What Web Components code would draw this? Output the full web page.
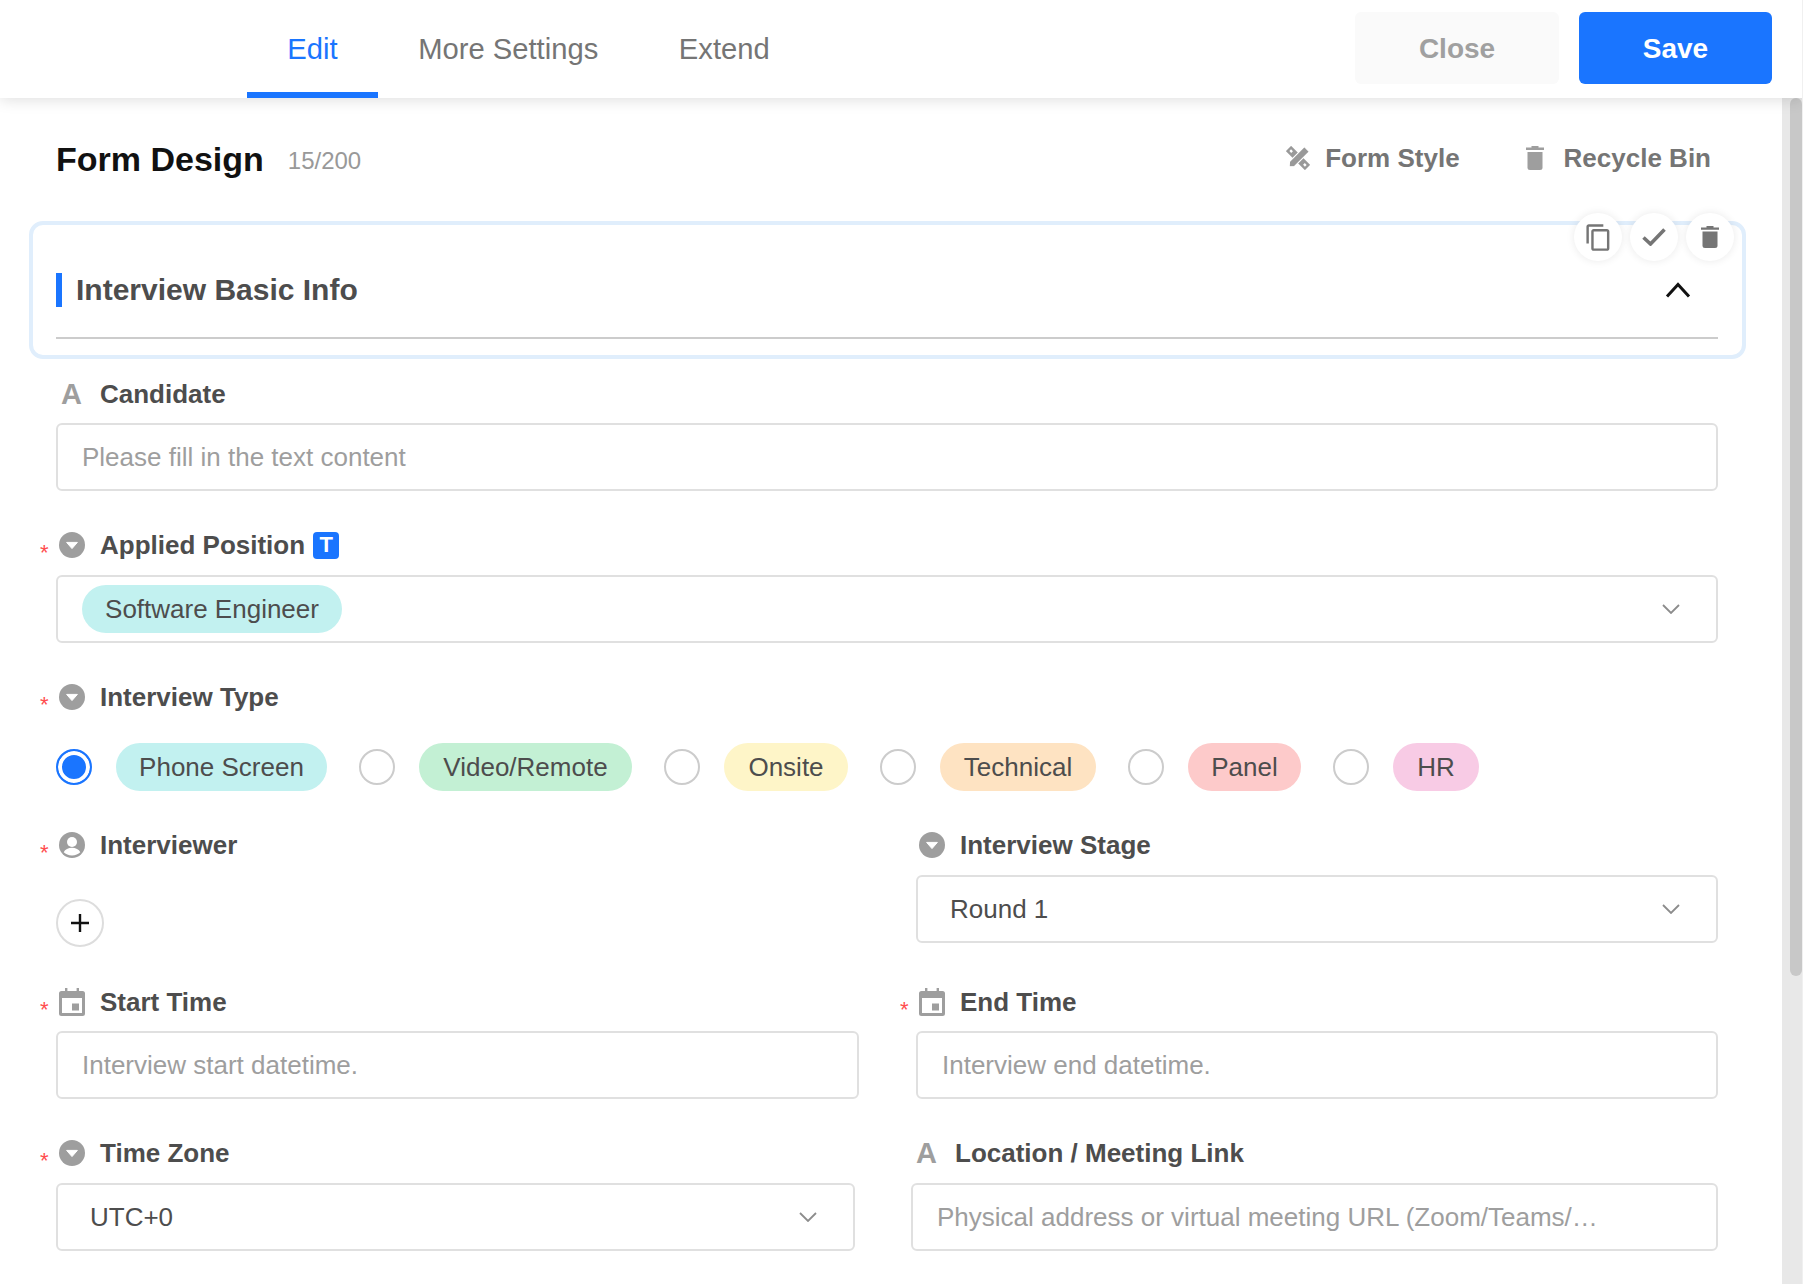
<!DOCTYPE html>
<html>
<head>
<meta charset="utf-8">
<title>Form Design</title>
<style>
  html, body { margin: 0; height: 100%; overflow: hidden; background: #fff; }
  body { font-family: "Liberation Sans", Arial, sans-serif; color: #4d4d4d; }
</style>
</head>
<body>
<app-shell>
  <app-header></app-header>
  <form-head></form-head>
  <section-card title="Interview Basic Info"></section-card>
  <form-body>
    <form-field label="Candidate" icon="text" tight>
      <text-box>Please fill in the text content</text-box>
    </form-field>

    <form-field label="Applied Position" icon="caret" required>
      <span slot="badge" class="t-badge">T</span>
      <select-box tag>
        <color-tag color="#c2f1f0" width="260">Software Engineer</color-tag>
      </select-box>
    </form-field>

    <form-field label="Interview Type" icon="caret" required>
      <option-row>
        <radio-option checked color="#c2f1f0" width="211">Phone Screen</radio-option>
        <radio-option color="#c3f0d4" width="213">Video/Remote</radio-option>
        <radio-option color="#fef5c8" width="124">Onsite</radio-option>
        <radio-option color="#fee3c2" width="156">Technical</radio-option>
        <radio-option color="#fdcaca" width="113">Panel</radio-option>
        <radio-option color="#f8cbe5" width="86">HR</radio-option>
      </option-row>
    </form-field>

    <form-row>
      <form-field label="Interviewer" icon="person" required>
        <add-button></add-button>
      </form-field>
      <form-field label="Interview Stage" icon="caret">
        <select-box value>Round 1</select-box>
      </form-field>
    </form-row>

    <form-row>
      <form-field label="Start Time" icon="calendar" required tight>
        <text-box>Interview start datetime.</text-box>
      </form-field>
      <form-field label="End Time" icon="calendar" required tight>
        <text-box>Interview end datetime.</text-box>
      </form-field>
    </form-row>

    <form-row shifted>
      <form-field label="Time Zone" icon="caret" required>
        <select-box value>UTC+0</select-box>
      </form-field>
      <form-field label="Location / Meeting Link" icon="text">
        <text-box>Physical address or virtual meeting URL (Zoom/Teams/…</text-box>
      </form-field>
    </form-row>
  </form-body>
</app-shell>

<script>
const ICONS = {
  caret: `<svg viewBox="0 0 26 26" width="26" height="26"><circle cx="13" cy="13" r="13" fill="#9e9e9e"/><path d="M7.6 10.4h10.8L13 16.6z" fill="#fff" stroke="#fff" stroke-width="1" stroke-linejoin="round"/></svg>`,
  person: `<svg viewBox="0 0 26 26" width="26" height="26"><circle cx="13" cy="13" r="13" fill="#9e9e9e"/><circle cx="13" cy="10" r="5" fill="#fff"/><path d="M4.700 20.300c1.300-3 4.700-4.600 8.300-4.600s7 1.600 8.300 4.600c-1.900 2-5 3.100-8.300 3.100s-6.400-1.100-8.300-3.100z" fill="#fff"/></svg>`,
  calendar: `<svg viewBox="0 0 26 28" width="26" height="28"><path d="M6 0h2.400v3H17.600V0H20v3h3.500A2.500 2.500 0 0 1 26 5.500v20a2.500 2.500 0 0 1-2.500 2.500h-21A2.500 2.500 0 0 1 0 25.500v-20A2.500 2.500 0 0 1 2.500 3H6z" fill="#9e9e9e"/><rect x="3" y="10" width="20" height="15" fill="#fff"/><rect x="13" y="15.500" width="7" height="7" fill="#9e9e9e"/></svg>`,
  style: `<svg viewBox="0 0 24 24" width="24" height="24"><g transform="rotate(45 12 12)"><rect x="-1.500" y="8.300" width="27" height="7.400" fill="#999"/><rect x="1" y="10.800" width="2.600" height="2.400" fill="#fff"/><rect x="20.400" y="10.800" width="2.600" height="2.400" fill="#fff"/></g><g transform="rotate(-45 12 12)"><path d="M-.5 12l4-3.500h21v7h-21z" fill="#999" stroke="#fff" stroke-width="1.100"/></g></svg>`,
  bin: `<svg viewBox="0 0 18 24" width="18" height="24"><path d="M5.500 0h7v1.500H18v2.600H0V1.500h5.500z" fill="#9e9e9e"/><path d="M1.500 6h15v15.500a2.500 2.500 0 0 1-2.500 2.500H4a2.500 2.500 0 0 1-2.500-2.500z" fill="#9e9e9e"/></svg>`,
  bindark: `<svg viewBox="0 0 18 22" width="18" height="22"><path d="M5.500 0h7v1.500H18v2.300H0V1.500h5.500z" fill="#757575"/><path d="M1.500 5.500h15v14a2.500 2.500 0 0 1-2.500 2.500H4a2.500 2.500 0 0 1-2.500-2.500z" fill="#757575"/></svg>`,
  copy: `<svg viewBox="0 0 24 24" width="29" height="29"><path fill="#757575" d="M16 1H4c-1.100 0-2 .9-2 2v14h2V3h12V1zm3 4H8c-1.100 0-2 .9-2 2v14c0 1.100.9 2 2 2h11c1.100 0 2-.9 2-2V7c0-1.100-.9-2-2-2zm0 16H8V7h11v14z"/></svg>`,
  check: `<svg viewBox="0 0 24 18" width="24" height="18"><path d="M1.500 9.500l7 6.500L22.500 1.500" fill="none" stroke="#757575" stroke-width="3.600"/></svg>`,
  chevron: `<svg viewBox="0 0 18 10" width="18" height="10"><path d="M1 1l8 8 8-8" fill="none" stroke="#8c8c8c" stroke-width="1.800"/></svg>`,
  up: `<svg viewBox="0 0 26 16" width="26" height="16"><path d="M2 14.500L13 2.500l11 12" fill="none" stroke="#111" stroke-width="3"/></svg>`,
  plus: `<svg viewBox="0 0 20 20" width="20" height="20"><path d="M10 1v18M1 10h18" fill="none" stroke="#111" stroke-width="2.400"/></svg>`
};

class AppShell extends HTMLElement {
  constructor() {
    super();
    this.attachShadow({ mode: 'open' });
  }

  connectedCallback() {
    this.shadowRoot.innerHTML = `
      <style>
        :host {
          display: flex;
          flex-direction: column;
          width: 1803px;
          height: 1284px;
          border-right: 1px solid #f0f0f0;
          box-sizing: border-box;
          overflow: hidden;
        }
        .main { flex: 1; display: flex; min-height: 0; }
        .content { flex: 1; padding: 0 36px 0 29px; min-width: 0; }
        .scrollbar {
          width: 20px;
          background: #e8e8e8;
          padding-left: 8px;
          box-sizing: border-box;
        }
        .thumb { height: 878px; background: #c8c8c8; border-radius: 6px; }
      </style>
      <slot name="top"></slot>
      <div class="main">
        <div class="content"><slot></slot></div>
        <div class="scrollbar"><div class="thumb"></div></div>
      </div>
    `;
    this.querySelector('app-header').slot = 'top';
  }
}

class AppHeader extends HTMLElement {
  constructor() {
    super();
    this.attachShadow({ mode: 'open' });
  }

  connectedCallback() {
    this.shadowRoot.innerHTML = `
      <style>
        :host {
          display: flex;
          align-items: stretch;
          height: 98px;
          padding-left: 247px;
          background: #fff;
          box-shadow: 0 2px 14px rgba(0, 0, 0, .13);
          position: relative;
          z-index: 2;
        }
        a {
          display: flex;
          align-items: center;
          padding: 0 40.300px;
          font-size: 29.200px;
          color: #757575;
          box-sizing: border-box;
          border-bottom: 6px solid transparent;
          border-top: 6px solid transparent;
        }
        a.on { color: #1a75ff; border-bottom-color: #1a75ff; }
        .btns { margin-left: auto; display: flex; gap: 20px; padding: 12px 30px 14px 0; }
        button {
          font: bold 28px "Liberation Sans", Arial, sans-serif;
          border: 0;
          border-radius: 6px;
          padding: 2px 0 0;
        }
        .close { width: 204px; background: #fafafa; color: #a0a0a0; }
        .save { width: 193px; background: #1a75ff; color: #fff; }
      </style>
      <a class="on">Edit</a>
      <a>More Settings</a>
      <a>Extend</a>
      <div class="btns">
        <button class="close">Close</button>
        <button class="save">Save</button>
      </div>
    `;
  }
}

class FormHead extends HTMLElement {
  constructor() {
    super();
    this.attachShadow({ mode: 'open' });
  }

  connectedCallback() {
    this.shadowRoot.innerHTML = `
      <style>
        :host {
          display: flex;
          align-items: center;
          height: 40px;
          padding: 40px 35px 43px 27px;
        }
        h1 { margin: 0; font-size: 34px; font-weight: bold; color: #111; padding-top: 2px; }
        .count { margin-left: 24px; margin-top: 5px; font-size: 24px; color: #999; }
        .act {
          display: flex;
          align-items: center;
          font-size: 26px;
          font-weight: bold;
          color: #757575;
        }
        .style { margin-left: auto; gap: 15px; }
        .bin { margin-left: 62px; gap: 20px; padding-left: 4px; }
        svg { display: block; }
      </style>
      <h1>Form Design</h1>
      <span class="count">15/200</span>
      <span class="act style">${ICONS.style}Form Style</span>
      <span class="act bin">${ICONS.bin}Recycle Bin</span>
    `;
  }
}

class SectionCard extends HTMLElement {
  constructor() {
    super();
    this.attachShadow({ mode: 'open' });
  }

  connectedCallback() {
    this.shadowRoot.innerHTML = `
      <style>
        :host {
          display: block;
          position: relative;
          height: 138px;
          box-sizing: border-box;
          border: 4px solid #e0eefc;
          border-radius: 14px;
          padding: 0 24px 0 23px;
        }
        .row {
          height: 114px;
          box-sizing: border-box;
          padding-top: 18px;
          display: flex;
          align-items: center;
          border-bottom: 2px solid #ccc;
        }
        .bar { width: 6px; height: 34px; background: #1a75ff; margin-right: 14px; }
        h2 { margin: 0; font-size: 30px; font-weight: bold; color: #4d4d4d; }
        .toggle { margin-left: auto; margin-right: 27px; display: block; }
        .toggle svg { display: block; }
        .tools {
          position: absolute;
          top: -12px;
          right: 8px;
          display: flex;
          gap: 8px;
        }
        .tools span {
          width: 48px;
          height: 48px;
          border-radius: 50%;
          background: #fff;
          box-shadow: 0 0 8px rgba(0, 0, 0, .09);
          display: flex;
          align-items: center;
          justify-content: center;
        }
        .tools svg { display: block; }
      </style>
      <div class="row">
        <span class="bar"></span>
        <h2>${this.getAttribute('title')}</h2>
        <span class="toggle">${ICONS.up}</span>
      </div>
      <div class="tools">
        <span>${ICONS.copy}</span>
        <span>${ICONS.check}</span>
        <span>${ICONS.bindark}</span>
      </div>
    `;
  }
}

class FormBody extends HTMLElement {
  constructor() {
    super();
    this.attachShadow({ mode: 'open' });
  }

  connectedCallback() {
    this.shadowRoot.innerHTML = `
      <style>
        :host {
          display: flex;
          flex-direction: column;
          gap: 34px;
          padding: 15px 28px 0 27px;
        }
      </style>
      <slot></slot>
    `;
  }
}

class FormRow extends HTMLElement {
  constructor() {
    super();
    this.attachShadow({ mode: 'open' });
  }

  connectedCallback() {
    this.shadowRoot.innerHTML = `
      <style>
        :host { display: grid; grid-template-columns: 803px 802px; column-gap: 57px; }
        :host([shifted]) { grid-template-columns: 799px 807px; column-gap: 56px; }
      </style>
      <slot></slot>
    `;
  }
}

class FormField extends HTMLElement {
  constructor() {
    super();
    this.attachShadow({ mode: 'open' });
  }

  connectedCallback() {
    const icon = this.getAttribute('icon');
    const glyph = icon === 'text' ? '<span class="a">A</span>' : ICONS[icon];
    const star = this.hasAttribute('required') ? '<span class="star">*</span>' : '';
    this.shadowRoot.innerHTML = `
      <style>
        :host { display: block; min-width: 0; }
        .label {
          display: flex;
          align-items: center;
          height: 40px;
          margin-bottom: 10px;
          font-size: 26px;
          font-weight: bold;
          color: #4d4d4d;
        }
        :host([tight]) .label { margin-bottom: 9px; }
        .star {
          width: 16px;
          margin-left: -16px;
          font-size: 22px;
          font-weight: normal;
          color: #ff4d4f;
          padding-top: 16px;
          box-sizing: border-box;
        }
        .icon { width: 44px; padding-left: 3px; box-sizing: border-box; flex: none; }
        .icon svg { display: block; }
        .a { font-size: 29px; font-weight: bold; color: #9e9e9e; margin-left: 2px; line-height: 40px; display: block; }
        ::slotted([slot=badge]) {
          margin-left: 8px;
          width: 26px;
          height: 27px;
          border-radius: 4px;
          background: #1a75ff;
          color: #fff;
          font-size: 22px;
          font-weight: bold;
          display: flex;
          align-items: center;
          justify-content: center;
        }
      </style>
      <div class="label">${star}<span class="icon">${glyph}</span><span>${this.getAttribute('label')}</span><slot name="badge"></slot></div>
      <slot></slot>
    `;
  }
}

class TextBox extends HTMLElement {
  constructor() {
    super();
    this.attachShadow({ mode: 'open' });
  }

  connectedCallback() {
    this.shadowRoot.innerHTML = `
      <style>
        :host {
          display: flex;
          align-items: center;
          height: 68px;
          box-sizing: border-box;
          padding: 0 24px;
          border: 2px solid #e0e0e0;
          border-radius: 6px;
          font-size: 26px;
          color: #9e9e9e;
          white-space: nowrap;
        }
      </style>
      <slot></slot>
    `;
  }
}

class SelectBox extends HTMLElement {
  constructor() {
    super();
    this.attachShadow({ mode: 'open' });
  }

  connectedCallback() {
    this.shadowRoot.innerHTML = `
      <style>
        :host {
          display: flex;
          align-items: center;
          justify-content: space-between;
          height: 68px;
          box-sizing: border-box;
          padding: 0 36px 0 24px;
          border: 2px solid #e0e0e0;
          border-radius: 6px;
          font-size: 26px;
          color: #4d4d4d;
        }
        :host([value]) { padding-left: 32px; }
        .chev { display: block; }
        .chev svg { display: block; }
      </style>
      <span><slot></slot></span>
      <span class="chev">${ICONS.chevron}</span>
    `;
  }
}

class ColorTag extends HTMLElement {
  constructor() {
    super();
    this.attachShadow({ mode: 'open' });
  }

  connectedCallback() {
    const width = this.getAttribute('width');
    this.shadowRoot.innerHTML = `
      <style>
        :host {
          display: inline-flex;
          align-items: center;
          justify-content: center;
          box-sizing: border-box;
          width: ${width}px;
          height: 48px;
          border-radius: 24px;
          background: ${this.getAttribute('color')};
          font-size: 26px;
          color: #4d4d4d;
          white-space: nowrap;
        }
      </style>
      <slot></slot>
    `;
  }
}

class OptionRow extends HTMLElement {
  constructor() {
    super();
    this.attachShadow({ mode: 'open' });
  }

  connectedCallback() {
    this.shadowRoot.innerHTML = `
      <style>
        :host { display: flex; gap: 32px; padding-top: 16px; }
      </style>
      <slot></slot>
    `;
  }
}

class RadioOption extends HTMLElement {
  constructor() {
    super();
    this.attachShadow({ mode: 'open' });
  }

  connectedCallback() {
    this.shadowRoot.innerHTML = `
      <style>
        :host { display: flex; align-items: center; gap: 24px; }
        .dot {
          width: 36px;
          height: 36px;
          box-sizing: border-box;
          border-radius: 50%;
          border: 2px solid #ccc;
          background: #fff;
        }
        :host([checked]) .dot {
          border-color: #1a75ff;
          background: #1a75ff;
          box-shadow: inset 0 0 0 4px #fff;
        }
      </style>
      <span class="dot"></span>
      <color-tag color="${this.getAttribute('color')}" width="${this.getAttribute('width')}"><slot></slot></color-tag>
    `;
  }
}

class AddButton extends HTMLElement {
  constructor() {
    super();
    this.attachShadow({ mode: 'open' });
  }

  connectedCallback() {
    this.shadowRoot.innerHTML = `
      <style>
        :host { display: block; padding: 24px 0 1px; }
        div {
          width: 48px;
          height: 48px;
          box-sizing: border-box;
          border: 2px solid #ddd;
          border-radius: 50%;
          display: flex;
          align-items: center;
          justify-content: center;
        }
        svg { display: block; }
      </style>
      <div>${ICONS.plus}</div>
    `;
  }
}

customElements.define('app-shell', AppShell);
customElements.define('app-header', AppHeader);
customElements.define('form-head', FormHead);
customElements.define('section-card', SectionCard);
customElements.define('form-body', FormBody);
customElements.define('form-row', FormRow);
customElements.define('form-field', FormField);
customElements.define('text-box', TextBox);
customElements.define('select-box', SelectBox);
customElements.define('color-tag', ColorTag);
customElements.define('option-row', OptionRow);
customElements.define('radio-option', RadioOption);
customElements.define('add-button', AddButton);
</script>
</body>
</html>
